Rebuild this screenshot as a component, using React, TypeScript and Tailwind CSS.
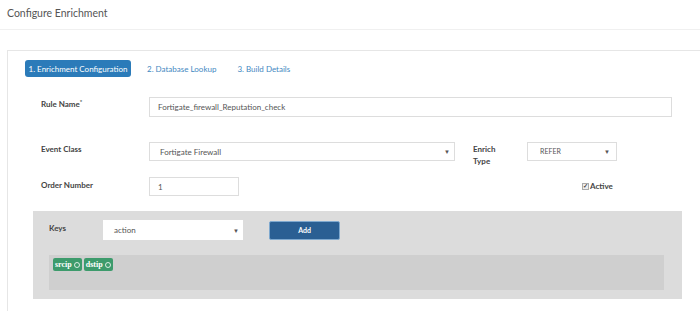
const font = { fontFamily: 'Lato, "Open Sans", sans-serif' };

function Caret() {
  return <span className="text-[6px] text-[#555]">▼</span>;
}

function Chip({ label }: { label: string }) {
  return (
    <span className="flex h-[13px] items-center gap-[2px] rounded-[2px] bg-[#3d9b6c] px-[2px] text-[8px] font-bold text-white [font-family:'Liberation_Serif',serif]">
      {label}
      <span className="inline-block h-[6px] w-[6px] rounded-full border border-white/80" />
    </span>
  );
}

export default function App() {
  return (
    <div className="h-[311px] w-[700px] overflow-hidden bg-white text-[#333]" style={font}>
      <div className="h-[30px] border-b border-[#f0f0f0] pl-[7px] pt-[6px] text-[10.5px] text-[#555]">
        Configure Enrichment
      </div>

      <div className="ml-[7px] mt-[20px] h-[300px] border-l border-t border-[#e6e6e6] pt-[9px]">
        {/* steps */}
        <div className="flex items-center pl-[17px] text-[8px]">
          <span className="flex h-[17px] w-[106px] items-center justify-center rounded-[3px] bg-[#2b7bb9] text-white">
            1. Enrichment Configuration
          </span>
          <span className="ml-[16px] text-[#3f88bf]">2. Database Lookup</span>
          <span className="ml-[21px] text-[#3f88bf]">3. Build Details</span>
        </div>

        {/* form */}
        <div className="mt-[20px] flex items-start">
          <span className="w-[141px] pl-[33px] pt-[1px] text-[8px] font-bold text-[#444]">
            Rule Name<sup className="text-[6px]">*</sup>
          </span>
          <div className="flex h-[20px] w-[523px] items-center border border-[#ddd] pl-[8px] text-[8px] text-[#555]">
            Fortigate_firewall_Reputation_check
          </div>
        </div>

        <div className="mt-[25px] flex items-start">
          <span className="w-[141px] pl-[33px] pt-[1px] text-[8px] font-bold text-[#444]">Event Class</span>
          <div className="flex h-[19px] w-[306px] items-center justify-between border border-[#ddd] pl-[10px] pr-[4px] text-[8px] text-[#555]">
            Fortigate Firewall
            <Caret />
          </div>
          <span className="ml-[18px] w-[54px] pt-[1px] text-[8px] font-bold leading-[12px] text-[#444]">
            Enrich
            <br />
            Type
          </span>
          <div className="flex h-[19px] w-[90px] items-center justify-between border border-[#ddd] pl-[12px] pr-[6px] text-[7px] text-[#555]">
            REFER
            <Caret />
          </div>
        </div>

        <div className="mt-[10px] flex items-start">
          <span className="w-[141px] pl-[33px] pt-[2px] text-[8px] font-bold text-[#444]">Order Number</span>
          <div className="flex h-[19px] w-[90px] items-center border border-[#ddd] pl-[8px] text-[8px] text-[#555]">
            1
          </div>
          <label className="ml-[343px] mt-[3px] flex items-center gap-[1px] text-[8px] font-bold text-[#444]">
            <span className="flex h-[7px] w-[7px] items-center justify-center border border-[#aaa] bg-[#eee] text-[6px] leading-none text-[#444]">
              ✓
            </span>
            Active
          </label>
        </div>

        {/* keys panel */}
        <div className="ml-[25px] mt-[15px] h-[88px] w-[649px] bg-[#dcdcdc] pt-[9px]">
          <div className="flex items-center">
            <span className="w-[70px] self-start pl-[16px] pt-[2px] text-[8px] font-bold text-[#444]">Keys</span>
            <div className="flex h-[20px] w-[140px] items-center justify-between bg-white pl-[11px] pr-[4px] text-[8px] text-[#555]">
              action
              <Caret />
            </div>
            <button className="ml-[26px] h-[19px] w-[71px] rounded-[2px] border border-[#7fa9cf] bg-[#2a5f93] text-[7px] font-bold text-white">
              Add
            </button>
          </div>
          <div className="ml-[16px] mt-[15px] flex h-[35px] w-[615px] items-start gap-[2px] bg-[#cfcfcf] pl-[4px] pt-[3px]">
            <Chip label="srcip" />
            <Chip label="dstip" />
          </div>
        </div>
      </div>
    </div>
  );
}
